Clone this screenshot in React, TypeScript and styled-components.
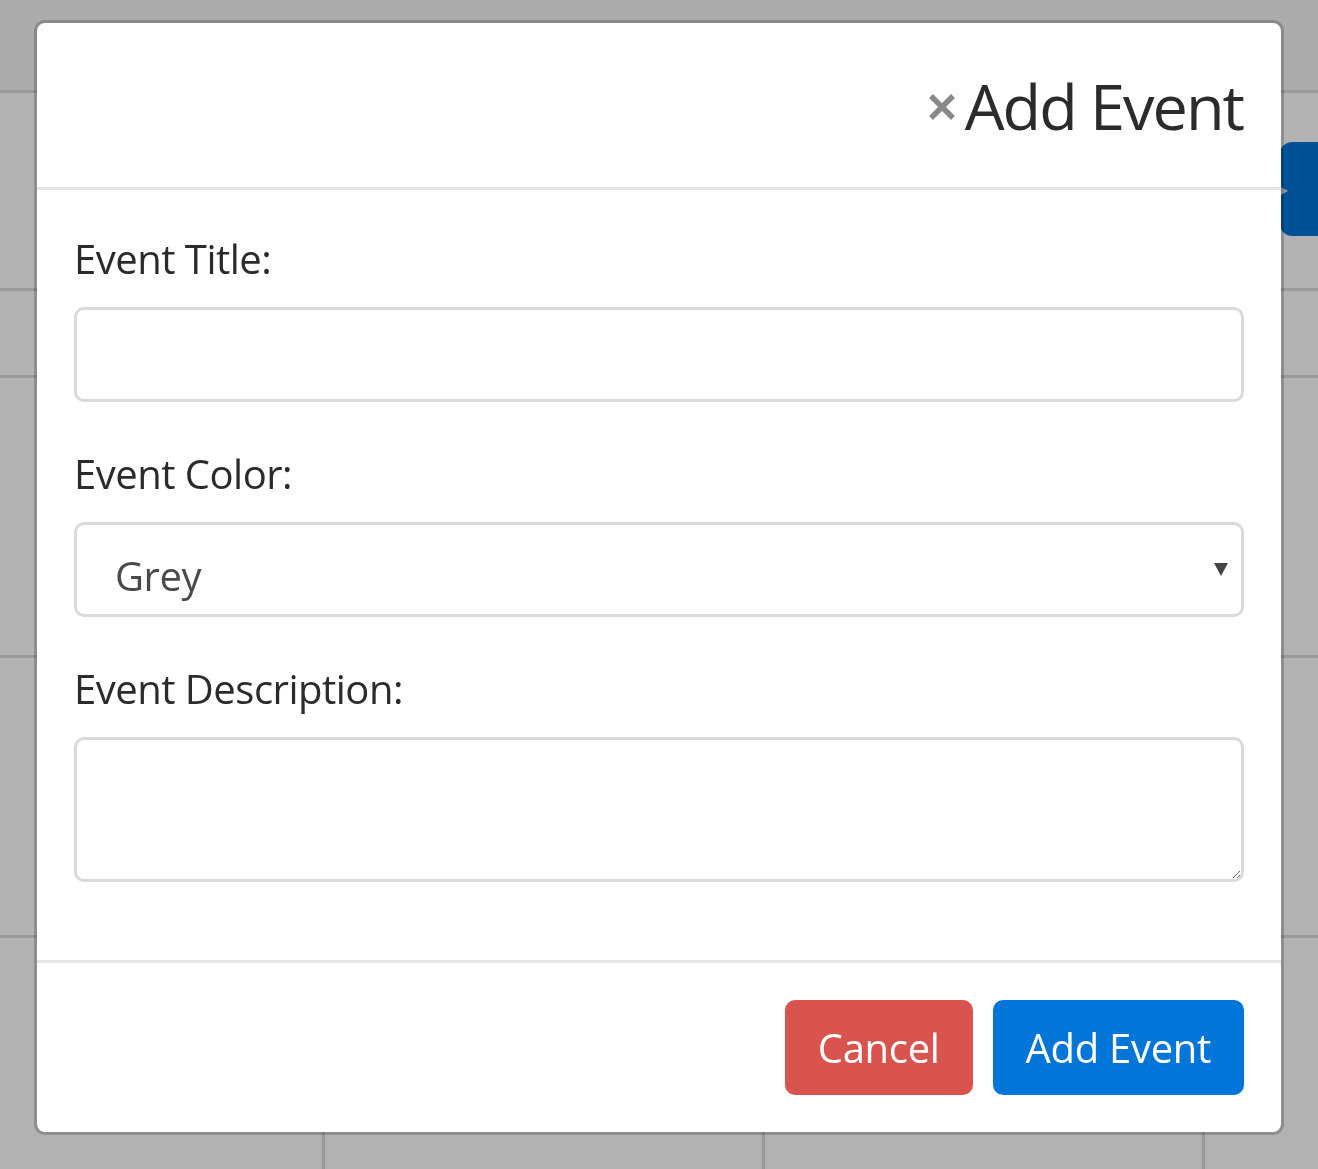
import React from "react";
import styled, { createGlobalStyle } from "styled-components";

const GlobalStyle = createGlobalStyle`
  html, body { margin: 0; padding: 0; }
  body {
    background: #ffffff;
    font-family: "Open Sans", "Noto Sans", "Noto Sans CJK KR", sans-serif;
    color: #333333;
    overflow: hidden;
  }
  * { box-sizing: border-box; }
`;

const Page = styled.div`
  position: relative;
  width: 1318px;
  height: 1169px;
  overflow: hidden;
  background: #ffffff;
`;

const Calendar = styled.div`
  display: flex;
  flex-direction: column;
  height: 100%;
`;

const TopBand = styled.div`
  height: 90px;
  flex: none;
  background: #f6f6f8;
`;

const WeekRow = styled.div<{ $h?: number }>`
  display: grid;
  grid-template-columns: 322px 440px 440px 1fr;
  border-top: 3px solid #dcdcdc;
  height: ${(p) => (p.$h ? `${p.$h}px` : "auto")};
  flex: ${(p) => (p.$h ? "none" : "1")};
`;

const DayCell = styled.div`
  & + & {
    border-left: 3px solid #dcdcdc;
  }
`;

const NextButton = styled.div`
  position: absolute;
  top: 142px;
  right: -12px;
  width: 50px;
  height: 94px;
  background: #0275d8;
  border-radius: 12px;
  display: flex;
  align-items: center;
  &::before {
    content: "";
    margin-left: 1px;
    margin-top: 3px;
    border-top: 4px solid transparent;
    border-bottom: 4px solid transparent;
    border-left: 7px solid #dcdcdc;
  }
`;

const Backdrop = styled.div`
  position: fixed;
  inset: 0;
  background: rgba(0, 0, 0, 0.3);
  display: flex;
  justify-content: center;
  align-items: flex-start;
  padding-top: 20px;
`;

const Modal = styled.div`
  width: 1250px;
  background: #ffffff;
  border: 3px solid rgba(0, 0, 0, 0.2);
  border-radius: 11px;
  background-clip: padding-box;
  display: flex;
  flex-direction: column;
`;

const Header = styled.div`
  height: 167px;
  border-bottom: 3px solid #e5e5e5;
  display: flex;
  justify-content: flex-end;
  align-items: center;
  padding: 0 38px 0 37px;
  gap: 8px;
`;

const CloseButton = styled.button`
  border: 0;
  background: transparent;
  padding: 0;
  margin: 0;
  width: 30px;
  height: 30px;
  display: flex;
  align-items: center;
  justify-content: center;
  cursor: pointer;
  margin-top: 4px;
`;

const Title = styled.h4`
  margin: 0;
  font-weight: 400;
  font-size: 63px;
  letter-spacing: -2px;
  line-height: 1;
  color: #2b2b2b;
`;

const Body = styled.div`
  padding: 40px 37px 34px;
  height: 770px;
`;

const FormGroup = styled.div`
  margin-bottom: 43px;
`;

const Label = styled.label`
  display: block;
  font-size: 40px;
  line-height: 57px;
  letter-spacing: -0.5px;
  color: #2b2b2b;
  margin-bottom: 20px;
`;

const fieldBase = `
  display: block;
  width: 100%;
  border: 3px solid #dadada;
  border-radius: 10px;
  background: #ffffff;
  font-family: "Open Sans", "Noto Sans", sans-serif;
  font-size: 40px;
  color: #555555;
  outline: none;
`;

const TextInput = styled.input`
  ${fieldBase}
  height: 95px;
  padding: 0 38px;
`;

const SelectWrap = styled.div`
  position: relative;
`;

const Select = styled.select`
  ${fieldBase}
  height: 95px;
  padding: 12px 38px 0 38px;
  appearance: none;
  -webkit-appearance: none;
  letter-spacing: -0.5px;
  color: #4a4a4a;
`;

const SelectArrow = styled.svg`
  position: absolute;
  right: 16px;
  top: 40px;
  pointer-events: none;
`;

const TextArea = styled.textarea`
  ${fieldBase}
  height: 145px;
  padding: 12px 38px;
  resize: both;
`;

const Footer = styled.div`
  border-top: 3px solid #e5e5e5;
  display: flex;
  justify-content: flex-end;
  gap: 20px;
  padding: 37px 37px 37px;
`;

const Button = styled.button<{ $variant: "danger" | "primary" }>`
  height: 95px;
  border: 0;
  border-radius: 10px;
  padding: 0 33px;
  font-family: "Open Sans", "Noto Sans", sans-serif;
  font-size: 40px;
  letter-spacing: -0.3px;
  color: #ffffff;
  background: ${(p) => (p.$variant === "danger" ? "#d9534f" : "#0275d8")};
  cursor: pointer;
`;

export default function App() {
  return (
    <>
      <GlobalStyle />
      <Page>
        <Calendar>
          <TopBand />
          <WeekRow $h={198}>
            <DayCell /><DayCell /><DayCell /><DayCell />
          </WeekRow>
          <WeekRow $h={87}>
            <DayCell /><DayCell /><DayCell /><DayCell />
          </WeekRow>
          <WeekRow $h={280}>
            <DayCell /><DayCell /><DayCell /><DayCell />
          </WeekRow>
          <WeekRow $h={280}>
            <DayCell /><DayCell /><DayCell /><DayCell />
          </WeekRow>
          <WeekRow>
            <DayCell /><DayCell /><DayCell /><DayCell />
          </WeekRow>
        </Calendar>
        <NextButton />
        <Backdrop>
          <Modal>
            <Header>
              <CloseButton aria-label="Close">
                <svg width="28" height="28" viewBox="0 0 28 28">
                  <path d="M3 3 L25 25 M25 3 L3 25" stroke="#888888" strokeWidth="5.5" strokeLinecap="butt" />
                </svg>
              </CloseButton>
              <Title>Add Event</Title>
            </Header>
            <Body>
              <FormGroup>
                <Label htmlFor="title">Event Title:</Label>
                <TextInput id="title" type="text" />
              </FormGroup>
              <FormGroup>
                <Label htmlFor="color">Event Color:</Label>
                <SelectWrap>
                  <Select id="color" defaultValue="grey">
                    <option value="grey">Grey</option>
                    <option value="red">Red</option>
                    <option value="blue">Blue</option>
                  </Select>
                  <SelectArrow width="14" height="14" viewBox="0 0 14 14">
                    <path d="M0 1 L14 1 L7 14 Z" fill="#444444" />
                  </SelectArrow>
                </SelectWrap>
              </FormGroup>
              <FormGroup>
                <Label htmlFor="desc">Event Description:</Label>
                <TextArea id="desc" />
              </FormGroup>
            </Body>
            <Footer>
              <Button $variant="danger">Cancel</Button>
              <Button $variant="primary">Add Event</Button>
            </Footer>
          </Modal>
        </Backdrop>
      </Page>
    </>
  );
}
